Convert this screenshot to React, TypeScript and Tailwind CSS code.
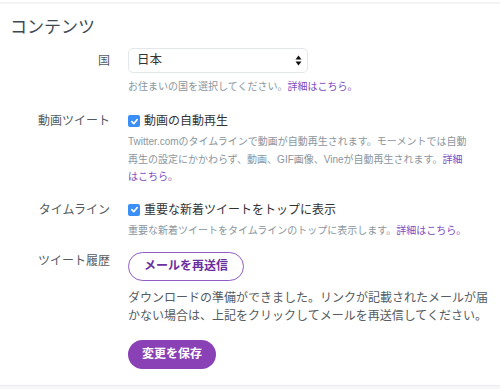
import React from "react";

const font = {
  fontFamily: '"Liberation Sans", "Noto Sans CJK JP", sans-serif',
};

const Row = ({
  label,
  className = "",
  children,
}: {
  label: string;
  className?: string;
  children: React.ReactNode;
}) => (
  <div className={`flex ${className}`}>
    <div className="w-[100px] shrink-0 text-right text-[12px] leading-[18px] text-[#555b61]">
      {label}
    </div>
    <div className="ml-[18px] flex-1 whitespace-nowrap">{children}</div>
  </div>
);

const Check = () => (
  <span className="inline-flex h-[12px] w-[12px] items-center justify-center rounded-[2px] bg-[#3a8ef6]">
    <svg width="9" height="9" viewBox="0 0 10 10">
      <path
        d="M2 5.2 L4.2 7.4 L8 2.8"
        fill="none"
        stroke="white"
        strokeWidth="1.8"
        strokeLinecap="round"
        strokeLinejoin="round"
      />
    </svg>
  </span>
);

const Link = ({ children }: { children: React.ReactNode }) => (
  <a className="text-[#7d4dbf]">{children}</a>
);

const App = () => {
  return (
    <div style={font} className="flex h-[389px] w-[500px] flex-col overflow-hidden bg-white">
      <div className="mt-[2px] h-[2px] bg-[#f3f3f5]" />
      <div className="flex-1 pl-[10px]">
        <h2 className="mt-[12px] text-[17px] leading-[24px] text-[#3e4852]">
          コンテンツ
        </h2>

        <Row label="国" className="mt-[8px] items-center">
          <div className="flex h-[25px] w-[180px] items-center justify-between rounded-[5px] border border-[#e3e7eb] pl-[8px] pr-[5px] text-[12.5px] text-[#333]">
            <span>日本</span>
            <svg width="7" height="11" viewBox="0 0 7 11">
              <path d="M3.5 0.5 L6.5 4.5 L0.5 4.5 Z" fill="#111" />
              <path d="M3.5 10.5 L6.5 6.5 L0.5 6.5 Z" fill="#111" />
            </svg>
          </div>
        </Row>
        <div className="ml-[118px] mt-[6px] text-[10px] leading-[16px] text-[#8a96a0]">
          お住まいの国を選択してください。<Link>詳細はこちら。</Link>
        </div>

        <Row label="動画ツイート" className="mt-[17px]">
          <div className="flex items-center gap-[4px] text-[12px] leading-[18px] text-[#333]">
            <Check />
            <span>動画の自動再生</span>
          </div>
          <p className="mt-[3px] text-[10px] leading-[17.5px] text-[#8a96a0]">
            Twitter.comのタイムラインで動画が自動再生されます。モーメントでは自動
            <br />
            再生の設定にかかわらず、動画、GIF画像、Vineが自動再生されます。
            <Link>詳細</Link>
            <br />
            <Link>はこちら。</Link>
          </p>
        </Row>

        <Row label="タイムライン" className="mt-[15px]">
          <div className="flex items-center gap-[4px] text-[12px] leading-[18px] text-[#333]">
            <Check />
            <span>重要な新着ツイートをトップに表示</span>
          </div>
          <p className="mt-[3px] text-[10px] leading-[17px] text-[#8a96a0]">
            重要な新着ツイートをタイムラインのトップに表示します。
            <Link>詳細はこちら。</Link>
          </p>
        </Row>

        <Row label="ツイート履歴" className="mt-[13px] items-start">
          <button className="h-[29px] rounded-full border border-[#8e5cc4] px-[15px] text-[12px] font-bold text-[#6a2fa0]">
            メールを再送信
          </button>
          <p className="mt-[8px] text-[12px] leading-[18px] text-[#555b61]">
            ダウンロードの準備ができました。リンクが記載されたメールが届
            <br />
            かない場合は、上記をクリックしてメールを再送信してください。
          </p>
          <button className="mt-[15px] h-[29px] rounded-full bg-[#8a41b6] px-[14px] text-[12px] font-bold text-white">
            変更を保存
          </button>
        </Row>
      </div>
      <div className="h-[4px] border-t border-[#ecebf3] bg-[#f7f7fa]" />
    </div>
  );
};

export default App;
